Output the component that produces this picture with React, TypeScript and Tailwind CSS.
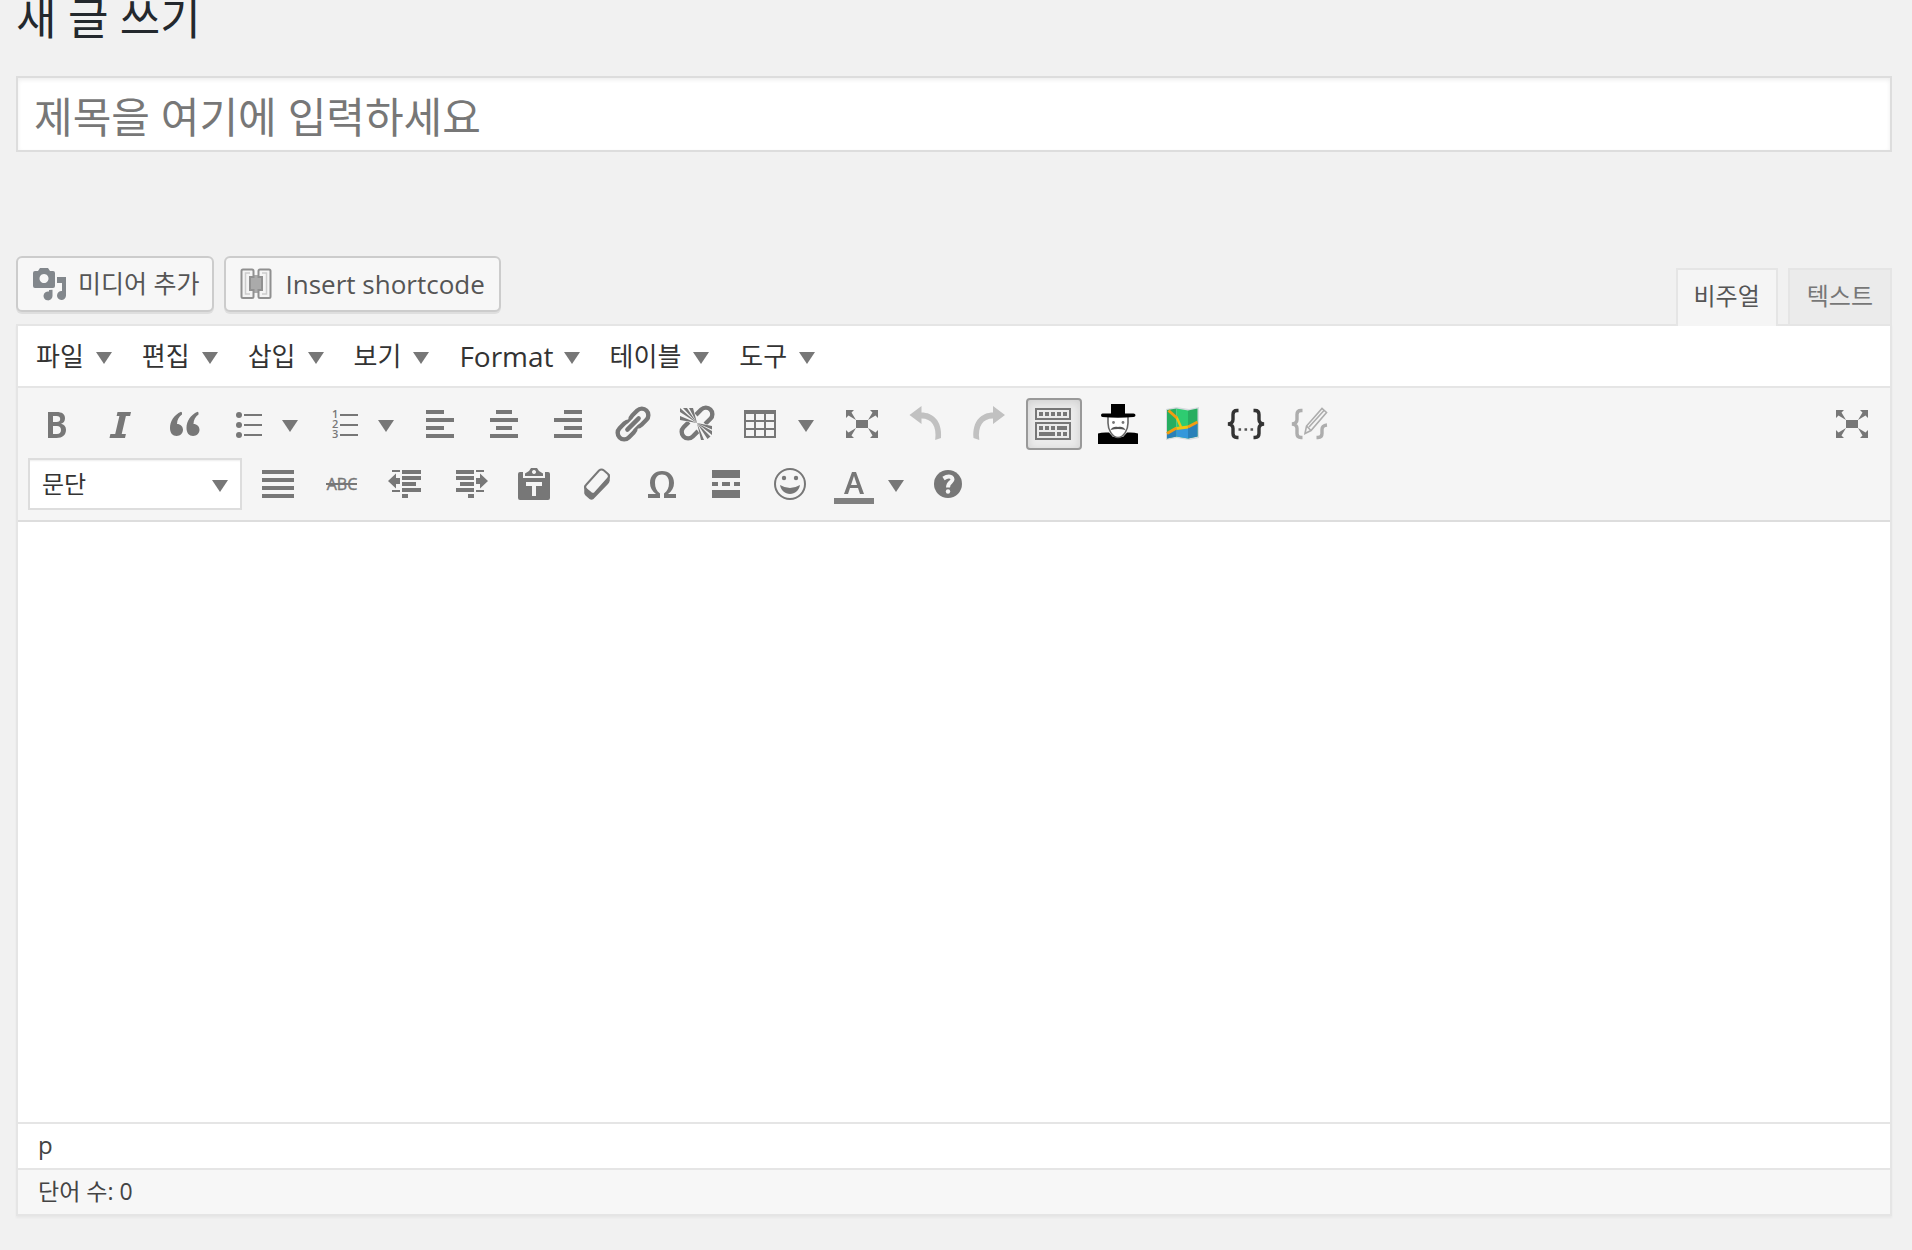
import React from "react";

function Caret() {
  return (
    <svg width="16" height="16" viewBox="0 0 16 16" className="shrink-0" fill="#777" aria-hidden="true">
      <path d="M0 4H16L8 16Z" />
    </svg>
  );
}

function Icon({ children, w = 40 }: { children: React.ReactNode; w?: number }) {
  return (
    <svg width={w} height="40" viewBox={`0 0 ${w} 40`} className="shrink-0" fill="currentColor" aria-hidden="true">
      {children}
    </svg>
  );
}

const glyph = "Open Sans, sans-serif";

function ExpandShape() {
  return (
    <>
      <path d="M14 16h12v8H14z" />
      <path d="M4 6h8l-2.500 2.500L14 16 6.500 11.500 4 14zM36 6h-8l2.500 2.500L26 16l7.500-4.500L36 14zM4 34h8l-2.500-2.500L14 24l-7.500 4.500L4 26zM36 34h-8l2.500-2.500L26 24l7.500 4.500L36 26z" />
    </>
  );
}

const icons: Record<string, React.ReactNode> = {
  bold: <path fillRule="evenodd" d="M12 8h8.500c5.500 0 8.500 2 8.500 6.300 0 3-1.500 4.900-4 5.500 3 .6 5 2.400 5 6C30 31 26.500 34 20.500 34H12zM17 12v6h3.500c2.500 0 3.700-1 3.700-3s-1.200-3-3.700-3zm0 10v8h4c2.500 0 4-1.300 4-4s-1.500-4-4-4z" />,
  italic: <path d="M17.500 8H31l-.9 4h-4.200l-4.200 18h4.200l-.9 4H9.500l.9-4h4.800l4.200-18h-2.800z" />,
  quote: <path d="M18 8.500l-1-.8C10 11 6 17 6 24c0 5 2.600 8 6.600 8 3.600 0 6.400-2.600 6.400-6.200 0-3.500-2.500-5.900-6-5.900C13 16 15 12.500 18 10.500zM34.500 8.500l-1-.8C26.500 11 22.500 17 22.500 24c0 5 2.600 8 6.600 8 3.600 0 6.400-2.600 6.400-6.200 0-3.500-2.500-5.900-6-5.900 0-3.900 2-7.400 5-9.400z" />,
  bullets: (
    <>
      <circle cx="11" cy="11" r="3" /><circle cx="11" cy="21" r="3" /><circle cx="11" cy="31" r="3" />
      <path d="M16 10h18v2H16zM16 20h18v2H16zM16 30h18v2H16z" />
    </>
  ),
  numbers: (
    <>
      <text x="8" y="14" fontSize="11" fontWeight="600" fontFamily={glyph}>1</text>
      <text x="8" y="24" fontSize="11" fontWeight="600" fontFamily={glyph}>2</text>
      <text x="8" y="34" fontSize="11" fontWeight="600" fontFamily={glyph}>3</text>
      <path d="M16 10h18v2H16zM16 20h18v2H16zM16 30h18v2H16z" />
    </>
  ),
  left: <path d="M6 6h18v4H6zM6 14h28v4H6zM6 22h18v4H6zM6 30h28v4H6z" />,
  center: <path d="M12 6h16v4H12zM6 14h28v4H6zM12 22h16v4H12zM6 30h28v4H6z" />,
  right: <path d="M16 6h18v4H16zM6 14h28v4H6zM16 22h18v4H16zM6 30h28v4H6z" />,
  justify: <path d="M4 6h32v4H4zM4 14h32v4H4zM4 22h32v4H4zM4 30h32v4H4z" />,
  link: (
    <g fill="none" stroke="currentColor" strokeWidth="4.400" transform="translate(1 0) rotate(-45 20 20)">
      <rect x="1" y="13.500" width="20" height="13" rx="6.500" />
      <rect x="19" y="13.500" width="20" height="13" rx="6.500" />
      <path d="M10 20h20" stroke="#f5f5f5" strokeWidth="8" strokeLinecap="round" />
      <path d="M12 20h16" strokeLinecap="round" />
    </g>
  ),
  unlink: (
    <g transform="translate(1 -1)">
      <g fill="none" stroke="currentColor" strokeWidth="4.400" transform="rotate(-45 20 20)">
        <path d="M15 13.500H7.500a6.500 6.500 0 0 0 0 13H15M25 13.500h7.500a6.500 6.500 0 0 1 0 13H25" />
      </g>
      <path d="M20 20L3 9V5zM20 20L3 17v-4zM20 20L6 5h4zM20 20L12 5h4zM20 20l15 3v3.500zM20 20l15 8v4zM20 20l13.500 13.500-3 2.500zM20 20l7 17h-3z" stroke="#f5f5f5" strokeWidth="1" paintOrder="stroke" />
    </g>
  ),
  table: <path fillRule="evenodd" d="M4 6h32v28H4zM6 10v6h8v-6zm10 0v6h8v-6zm10 0v6h8v-6zM6 18v6h8v-6zm10 0v6h8v-6zm10 0v6h8v-6zM6 26v6h8v-6zm10 0v6h8v-6zm10 0v6h8v-6z" />,
  expand: <ExpandShape />,
  undo: <path d="M3.500 11L15.500 2v6.500c11 0 21 8 19.500 25.500L29.200 36C31 22 25.500 14.500 15.500 14.500V20z" fill="#c1c1c1" />,
  redo: <path d="M35 11L23 2v6.500C12 8.500 2 16.500 3.500 34l5.800 2C7.500 22 13 14.500 23 14.500V20z" fill="#c1c1c1" />,
  keyboard: (
    <g transform="translate(-1 0)">
      <path fillRule="evenodd" d="M2 4h36v12H2zM4 6v8h32V6zM2 18h36v18H2zM4 20v14h32V20z" />
      <path d="M6 8h4v4H6zM12 8h4v4h-4zM18 8h4v4h-4zM24 8h4v4h-4zM30 8h4v4h-4zM6 22h4v4H6zM12 22h4v4h-4zM18 22h4v4h-4zM24 22h10v4H24zM6 28h16v4H6zM24 28h4v4h-4zM30 28h4v4h-4z" />
    </g>
  ),
  hat: (
    <>
      <path d="M0 29.500Q4 28 11 28.500L15 33h10l4-4.500q7-.5 11 1V40H0z" fill="#000" />
      <path d="M10 12h20v7c0 7-4.500 14.500-10 14.500S10 26 10 19z" fill="#fff" stroke="#666" strokeWidth="1.600" />
      <path d="M13 0h14v9.500h8.500q2 0 2 1.800t-2 1.800q-15.500 1.500-31 0-1.500 0-1.500-1.800t1.500-1.800H13z" fill="#000" />
      <path d="M12.500 26c1.500-3 4.500-3.800 7.500-3 3-.8 6 0 7.500 3-2.500-.6-5-1-7.500-1s-5 .4-7.500 1z" fill="#555" />
      <circle cx="15.500" cy="18.500" r="1.400" fill="#777" /><circle cx="25" cy="18.500" r="1.400" fill="#777" />
    </>
  ),
  map: (
    <>
      <path d="M4 5l10.500-2L27 5l10-2v31l-10 2-12.500-2L4 36z" fill="#d5dade" />
      <path d="M5 6l9.500-1.500v28L5 34.500z" fill="#27ae60" />
      <path d="M14.500 4.500L26 6.500v28l-11.500-2z" fill="#2ecc71" />
      <path d="M26 6.500l9.500-2v28l-9.500 2z" fill="#27ae60" />
      <path d="M5 30l9.500-5.500v8L5 34.500z" fill="#2980b9" />
      <path d="M14.500 24.500l11.500-1v11l-11.500-2z" fill="#3498db" />
      <path d="M26 23.500l9.500-4.500v13.500l-9.500 2z" fill="#2980b9" />
      <path d="M14.500 24.500L26 23" fill="none" stroke="#f1c40f" strokeWidth="3" />
      <path d="M14.500 13L19 23" fill="none" stroke="#f1c40f" strokeWidth="2.400" />
      <path d="M5 29.500l9.500-5.500M26 23l9.500-5M6.500 6.500l8.500 7.500" fill="none" stroke="#f39c12" strokeWidth="3" />
    </>
  ),
  braces: (
    <g fill="none" stroke="#333">
      <path d="M12.500 6.500H11q-4 0-4 4v5q0 4-5 4.500 5 .5 5 4.500v5q0 4 4 4h1.500M27.500 6.500H29q4 0 4 4v5q0 4 5 4.500-5 .5-5 4.500v5q0 4-4 4h-1.500" strokeWidth="3.400" />
      <path d="M12.500 25.500h2.600m3.400 0h2.600m3.400 0h2.600" strokeWidth="2.600" stroke="#555" />
    </g>
  ),
  bracesEdit: (
    <g fill="none" stroke="#adadad" transform="translate(-1 0)">
      <path d="M13.500 6.500H12q-4 0-4 4v5q0 4-5 4.500 5 .5 5 4.500v5q0 4 4 4h1.500M38 21q-5 .5-5 4.500v4q0 4-4 4h-1.500" strokeWidth="3.400" />
      <path d="M16 29.500L17.500 22 33 4.500l4.500 4L22 26.500zM17.500 22l4.500 4.500M20 23L35 6.500" strokeWidth="1.600" />
    </g>
  ),
  strike: (
    <>
      <text x="20" y="26" fontSize="16" textAnchor="middle" fontFamily={glyph} stroke="currentColor" strokeWidth=".4">ABC</text>
      <path d="M4 19h31v2H4z" />
    </>
  ),
  outdent: <path d="M16 6h19v4H16zM16 12h19v4H16zM16 18h14v4H16zM16 24h19v4H16zM16 30h6v4h-6zM6 6h8v2H6zM6 26h8v2H6zM2 17l8-7.500V14h4v6h-4v4.500z" />,
  indent: <path d="M6 6h18v4H6zM6 12h18v4H6zM10 18h14v4H10zM6 24h18v4H6zM18 30h6v4h-6zM26 6h8v2h-8zM26 26h8v2h-8zM38 17l-8-7.500V14h-4v6h4v4.500z" />,
  paste: (
    <>
      <path d="M6 8h3v6h22V8h3q2 0 2 2v24q0 2-2 2H6q-2 0-2-2V10q0-2 2-2z" />
      <path fillRule="evenodd" d="M11 12V9.500L15 7l2-3h6l2 3 4 2.500V12zM20 6a2 2 0 1 0 .01 0z" />
      <path d="M12 18h16v4h-6v10h-4V22h-6z" fill="#f5f5f5" />
    </>
  ),
  eraser: (
    <>
      <path d="M6.500 23v6.500l7 5.500 18-18v-7L14 27z" />
      <path d="M21 6.500q2.500-2 5 0l4 3.500q2 2 0 4.500L17 29q-2 1.500-4 0l-5-4q-2-2 0-4z" fill="#f5f5f5" stroke="currentColor" strokeWidth="2" />
      <path d="M6.500 22v7.500q0 1 1 2l4 3.500q2 1.500 4 0L30 20q1.500-1.500 1.500-3v-5L17 28.500q-2 2-4.500 0z" />
    </>
  ),
  omega: <path d="M6 34v-4h8c-4-3-6-6.500-6-11C8 11.500 13 7 20 7s12 4.500 12 12c0 4.500-2 8-6 11h8v4H22v-4.500c3.500-2.500 5-6 5-10.500 0-5.500-2.500-8.500-7-8.500s-7 3-7 8.500c0 4.500 1.500 8 5 10.500V34z" />,
  more: <path d="M6 6h28v8H6zM6 18h6v4H6zM16 18h8v4h-8zM28 18h6v4h-6zM6 26h28v8H6z" />,
  smile: (
    <>
      <circle cx="20" cy="20" r="15" fill="none" stroke="currentColor" strokeWidth="2" />
      <circle cx="14" cy="14" r="2.200" /><circle cx="26" cy="14" r="2.200" />
      <path d="M10 21q10 6 20 0c-1 5.500-5 9-10 9s-9-3.500-10-9z" />
    </>
  ),
  color: (
    <>
      <path fillRule="evenodd" d="M18 8h4l8 22h-4l-2-6h-8l-2 6h-4zM20 12l-3 9h6z" />
      <path d="M0 34h40v6H0z" fill="#808080" />
    </>
  ),
  help: (
    <>
      <circle cx="20" cy="20" r="14" />
      <path d="M15.500 14.500q4.500-3 7.500-1.500 3 2 0 4.800Q20 20 20 23.500" fill="none" stroke="#f5f5f5" strokeWidth="4" />
      <circle cx="20" cy="27.500" r="2.200" fill="#f5f5f5" />
    </>
  ),
};

function Tool({ name, label, active }: { name: string; label: string; active?: boolean }) {
  return (
    <button
      type="button"
      aria-label={label}
      aria-pressed={active}
      className={
        active
          ? "flex h-[52px] w-14 items-center justify-center rounded border-2 border-[#999] bg-[#ebebeb] text-[#777] shadow-[inset_0_2px_8px_rgba(0,0,0,0.12)]"
          : "flex h-[52px] w-14 items-center justify-center text-[#777]"
      }
    >
      <Icon>{icons[name]}</Icon>
    </button>
  );
}

function SplitTool({ name, label, width, gap }: { name: string; label: string; width: string; gap: string }) {
  return (
    <button type="button" aria-label={label} className={`flex h-[52px] items-center pl-2 text-[#777] ${width} ${gap}`}>
      <Icon>{icons[name]}</Icon>
      <Caret />
    </button>
  );
}

const menus = ["파일", "편집", "삽입", "보기", "Format", "테이블", "도구"];

export default function App() {
  return (
    <main className="min-h-screen overflow-hidden bg-[#f1f1f1] pr-5 pl-4 font-['Open_Sans','Noto_Sans_CJK_KR',sans-serif] text-[#444]">
      <h1 className="-mt-2 text-[44px] leading-[52px] text-[#23282d]">새 글 쓰기</h1>

      <input
        type="text"
        aria-label="제목"
        placeholder="제목을 여기에 입력하세요"
        className="mt-8 block h-[76px] w-full border-2 border-[#ddd] bg-white px-4 pt-1 text-[42px] text-[#32373c] shadow-[inset_0_2px_4px_rgba(0,0,0,0.07)] outline-none placeholder:text-[#777]"
      />

      <div className="mt-[104px] flex items-start justify-between">
        <div className="flex gap-[10px]">
          <button type="button" className="flex h-14 items-center gap-[10px] rounded-md border-2 border-[#ccc] bg-[#f7f7f7] pr-3 pl-[14px] text-[25px] text-[#555] shadow-[0_2px_0_rgba(0,0,0,0.08)]">
            <svg width="36" height="36" viewBox="0 0 36 36" fill="#82878c" aria-hidden="true">
              <path fillRule="evenodd" d="M3 5h3l2-3h8l2 3h3q2 0 2 2v13q0 2-2 2H3q-2 0-2-2V7q0-2 2-2zM12 8a4.500 4.500 0 1 0 .01 0z" />
              <path d="M25 11h9v18.500a4.500 4.500 0 1 1-4-4.500v-8h-5zM17 24l3.500-.3v6.300a4.500 4.500 0 1 1-3.500-4.500z" />
            </svg>
            미디어 추가
          </button>
          <button type="button" className="flex h-14 items-center gap-[14px] rounded-md border-2 border-[#ccc] bg-[#f7f7f7] px-[14px] text-[26px] text-[#555] shadow-[0_2px_0_rgba(0,0,0,0.08)]">
            <svg width="32" height="32" viewBox="0 0 32 32" fill="none" aria-hidden="true">
              <path d="M12 7h8l2 3v12l-2 3h-8l-2-3V10z" fill="#aaa" />
              <path d="M3 1.500h9q1.500 0 1.500 1.500v6H10v13h3.500v6.500q0 1.500-1.500 1.500H3q-1.500 0-1.500-1.500V3Q1.500 1.500 3 1.500zM29 1.500h-9q-1.500 0-1.500 1.500v6H22v13h-3.500v6.500q0 1.500 1.500 1.500h9q1.500 0 1.500-1.500V3q0-1.500-1.500-1.500z" fill="#f4f4f4" stroke="#909090" strokeWidth="2" />
              <path d="M10 5H5.500v21H10M22 5h4.500v21H22" stroke="#ccc" strokeWidth="1.500" />
            </svg>
            Insert shortcode
          </button>
        </div>
        <div role="tablist" className="relative mt-3 flex gap-[10px] text-[24px]">
          <button type="button" role="tab" aria-selected="true" className="-mb-[2px] h-[58px] border-2 border-b-0 border-[#e5e5e5] bg-[#f5f5f5] px-4 pb-1 text-[#555]">
            비주얼
          </button>
          <button type="button" role="tab" aria-selected="false" className="h-14 border-2 border-b-0 border-[#e5e5e5] bg-[#ebebeb] px-[17px] pb-0.5 text-[#777]">
            텍스트
          </button>
        </div>
      </div>

      <section className="border-2 border-[#e5e5e5] shadow-[0_2px_2px_rgba(0,0,0,0.04)]">
        <nav className="flex h-[60px] items-center gap-[30px] bg-white pl-[18px] text-[26px] text-[#333]">
          {menus.map((m) => (
            <button
              key={m}
              type="button"
              className={m === "Format" ? "flex items-center gap-[10px] text-[28px]" : "flex items-center gap-3"}
            >
              {m}
              <Caret />
            </button>
          ))}
        </nav>

        <div className="flex items-start justify-between border-y-2 border-t-[#e5e5e5] border-b-[#ddd] bg-[#f5f5f5] p-[10px]">
          <div className="flex flex-col gap-2">
            <div className="flex gap-2">
              <Tool name="bold" label="굵게" />
              <Tool name="italic" label="기울임" />
              <Tool name="quote" label="인용" />
              <SplitTool name="bullets" label="글머리 기호 목록" width="w-[88px]" gap="gap-[14px]" />
              <SplitTool name="numbers" label="번호 목록" width="w-[88px]" gap="gap-[14px]" />
              <Tool name="left" label="왼쪽 정렬" />
              <Tool name="center" label="가운데 정렬" />
              <Tool name="right" label="오른쪽 정렬" />
              <Tool name="link" label="링크" />
              <Tool name="unlink" label="링크 제거" />
              <SplitTool name="table" label="테이블" width="w-[94px]" gap="gap-[18px]" />
              <Tool name="expand" label="전체화면" />
              <Tool name="undo" label="실행취소" />
              <Tool name="redo" label="다시 실행" />
              <Tool name="keyboard" label="툴바 토글" active />
              <Tool name="hat" label="신사" />
              <Tool name="map" label="지도" />
              <Tool name="braces" label="코드" />
              <Tool name="bracesEdit" label="코드 편집" />
            </div>
            <div className="flex gap-2">
              <div className="relative w-[214px]">
                <select aria-label="형식" className="h-[52px] w-full appearance-none border-2 border-[#ddd] bg-white pl-3 text-[24px] text-[#333] shadow-[inset_0_2px_2px_-1px_rgba(0,0,0,0.07)]">
                  <option>문단</option>
                </select>
                <span className="pointer-events-none absolute inset-y-0 right-[14px] flex items-center">
                  <Caret />
                </span>
              </div>
              <Tool name="justify" label="양쪽 정렬" />
              <Tool name="strike" label="취소선" />
              <Tool name="outdent" label="내어쓰기" />
              <Tool name="indent" label="들여쓰기" />
              <Tool name="paste" label="텍스트로 붙여넣기" />
              <Tool name="eraser" label="서식 지우기" />
              <Tool name="omega" label="특수 문자" />
              <Tool name="more" label="더 보기 태그" />
              <Tool name="smile" label="이모티콘" />
              <SplitTool name="color" label="글자색" width="w-[86px]" gap="gap-[14px]" />
              <Tool name="help" label="도움말" />
            </div>
          </div>
          <Tool name="expand" label="방해 금지 글쓰기 모드" />
        </div>

        <textarea aria-label="본문" className="block h-[600px] w-full resize-none bg-white p-5 text-[26px] outline-none" />

        <div className="flex h-[46px] items-center border-t-2 border-[#e5e5e5] bg-white px-5 pb-0.5 text-[24px]">p</div>
        <div className="flex h-[46px] items-center border-t-2 border-[#e5e5e5] bg-[#f7f7f7] px-5 pb-0.5 text-[23px]">단어 수: 0</div>
      </section>
    </main>
  );
}
